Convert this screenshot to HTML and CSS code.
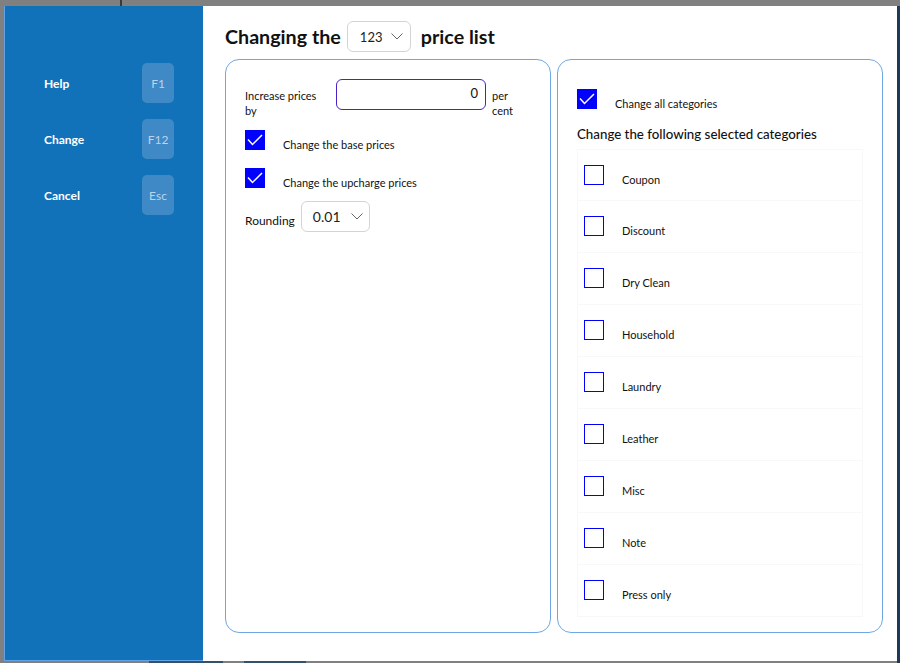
FILE: index.html
```html
<!DOCTYPE html>
<html lang="en">
<head>
<meta charset="utf-8">
<title>Changing the price list</title>
<link rel="stylesheet" href="styles.css">
</head>
<body>
<div class="backdrop">
  <span class="bg-line bg-line-top"></span>
  <span class="bg-block bg-block-1"></span>
  <span class="bg-block bg-block-2"></span>
  <span class="bg-edge"></span>
</div>
<div class="modal">
  <aside class="sidebar">
    <div class="cmd"><span class="cmd-label">Help</span><span class="key">F1</span></div>
    <div class="cmd"><span class="cmd-label">Change</span><span class="key">F12</span></div>
    <div class="cmd"><span class="cmd-label">Cancel</span><span class="key">Esc</span></div>
  </aside>
  <main class="content">
    <h1 class="title">
      <span>Changing the</span>
      <span class="select select-title">123
        <svg class="chev" width="12" height="7" viewBox="0 0 12 7"><polyline points="0.5,0.5 6,6 11.5,0.5" fill="none" stroke="#666" stroke-width="1"/></svg>
      </span>
      <span>price list</span>
    </h1>
    <div class="cards">
      <section class="card card-left">
        <div class="inc-row">
          <label class="inc-label">Increase prices by</label>
          <div class="input">0</div>
          <span class="inc-unit">per cent</span>
        </div>
        <div class="check-row check-base">
          <span class="cb cb-on"><svg width="20" height="20" viewBox="0 0 20 20"><polyline points="3,9.5 7.5,14.5 17,5" fill="none" stroke="#fff" stroke-width="1.5"/></svg></span>
          <span class="check-label">Change the base prices</span>
        </div>
        <div class="check-row check-up">
          <span class="cb cb-on"><svg width="20" height="20" viewBox="0 0 20 20"><polyline points="3,9.5 7.5,14.5 17,5" fill="none" stroke="#fff" stroke-width="1.5"/></svg></span>
          <span class="check-label">Change the upcharge prices</span>
        </div>
        <div class="round-row">
          <span class="round-label">Rounding</span>
          <span class="select select-round">0.01
            <svg class="chev" width="12" height="7" viewBox="0 0 12 7"><polyline points="0.5,0.5 6,6 11.5,0.5" fill="none" stroke="#666" stroke-width="1"/></svg>
          </span>
        </div>
      </section>
      <section class="card card-right">
        <div class="check-row">
          <span class="cb cb-on"><svg width="20" height="20" viewBox="0 0 20 20"><polyline points="3,9.5 7.5,14.5 17,5" fill="none" stroke="#fff" stroke-width="1.5"/></svg></span>
          <span class="check-label">Change all categories</span>
        </div>
        <h2 class="sub">Change the following selected categories</h2>
        <ul class="cats">
          <li class="cat"><span class="cb"></span><span class="check-label">Coupon</span></li>
          <li class="cat"><span class="cb"></span><span class="check-label">Discount</span></li>
          <li class="cat"><span class="cb"></span><span class="check-label">Dry Clean</span></li>
          <li class="cat"><span class="cb"></span><span class="check-label">Household</span></li>
          <li class="cat"><span class="cb"></span><span class="check-label">Laundry</span></li>
          <li class="cat"><span class="cb"></span><span class="check-label">Leather</span></li>
          <li class="cat"><span class="cb"></span><span class="check-label">Misc</span></li>
          <li class="cat"><span class="cb"></span><span class="check-label">Note</span></li>
          <li class="cat"><span class="cb"></span><span class="check-label">Press only</span></li>
        </ul>
      </section>
    </div>
  </main>
</div>
</body>
</html>
```

FILE: styles.css
```css
* { box-sizing: border-box; }
html, body { margin: 0; padding: 0; }
body {
  width: 900px;
  height: 663px;
  overflow: hidden;
  background: #808080;
  font-family: Lato, "Noto Sans", sans-serif;
  color: #111;
  position: relative;
}
.backdrop { position: absolute; inset: 0; }
.bg-line-top { position: absolute; left: 120px; top: 0; width: 2px; height: 6px; background: #3a3a3a; }
.bg-block { position: absolute; top: 661px; height: 2px; background: #33506f; }
.bg-block-1 { left: 149px; width: 74px; }
.bg-block-2 { left: 244px; width: 62px; }
.bg-edge { position: absolute; left: 897px; top: 6px; width: 3px; height: 657px; background: #1f3a58; }

.modal {
  position: relative;
  margin: 6px 0 0 4px;
  width: 893px;
  height: 655px;
  background: #fff;
  display: flex;
}
.sidebar {
  width: 199px;
  background: #1172b9;
  border-left: 1px solid #62a3e6;
  border-bottom: 1px solid #62a3e6;
  padding: 57px 29px 0 39px;
  display: flex;
  flex-direction: column;
  gap: 16px;
}
.cmd {
  display: flex;
  align-items: center;
  justify-content: space-between;
  height: 40px;
}
.cmd-label { color: #fff; font-size: 12px; font-weight: 700; }
.key {
  width: 32px;
  height: 40px;
  border-radius: 5px;
  background: #3f89c6;
  color: #b9d4ec;
  font-size: 12px;
  display: flex;
  align-items: center;
  justify-content: center;
}
.content {
  flex: 1;
  padding: 15px 14px 28px 22px;
  display: flex;
  flex-direction: column;
  gap: 7px;
}
.title {
  margin: 0;
  height: 31px;
  display: flex;
  align-items: center;
  gap: 10px;
  font-size: 19.7px;
  font-weight: 700;
  color: #111;
}
.select {
  display: inline-flex;
  align-items: center;
  height: 31px;
  border: 1px solid #d4d4d4;
  border-radius: 6px;
  background: #fff;
  font-weight: 400;
  color: #222;
}
.select-title { width: 64px; padding-left: 12px; gap: 9px; font-size: 13px; margin-left: -4px; }
.select-round { width: 69px; padding-left: 11px; gap: 10px; font-size: 14px; }
.chev { display: block; }

.cards {
  flex: 1;
  display: grid;
  grid-template-columns: 326px 326px;
  gap: 6px;
}
.card {
  border: 1px solid #6ea7e4;
  border-radius: 14px;
  display: flex;
  flex-direction: column;
}
.card-left { padding: 19px 19px; }
.inc-row { display: flex; align-items: flex-start; gap: 6px; height: 31px; }
.inc-label { width: 85px; font-size: 11px; line-height: 15px; padding-top: 9px; }
.input {
  flex: none;
  width: 150px;
  height: 31px;
  border: 1px solid #4a22c7;
  border-radius: 6px;
  text-align: right;
  padding: 5px 7px 0 0;
  font-size: 13px;
}
.inc-unit { width: 30px; font-size: 11px; line-height: 15px; padding-top: 9px; }
.check-row { display: flex; align-items: flex-start; gap: 18px; height: 20px; }
.check-base { margin-top: 20px; }
.check-up { margin-top: 18px; }
.cb {
  flex: none;
  width: 20px;
  height: 20px;
  border: 1px solid #0000ff;
  background: #fff;
}
.cb-on { background: #0000ff; border: none; }
.cb svg { display: block; }
.check-label { font-size: 11px; line-height: 15px; padding-top: 7px; }
.round-row { display: flex; align-items: center; gap: 6px; margin-top: 13px; }
.round-label { font-size: 12px; padding-top: 8px; }

.card-right { padding: 29px 19px 0 19px; }
.sub {
  margin: 15px 0 0 0;
  font-size: 13.3px;
  font-weight: 500;
  line-height: 20px;
  color: #111;
}
.cats { list-style: none; margin: 5px 0 0 0; padding: 0; }
.cat {
  height: 52px;
  display: flex;
  align-items: flex-start;
  gap: 18px;
  padding: 15px 0 0 6px;
  border: 1px solid #f8f8f8;
  border-top: none;
}
.cat:first-child { border-top: 1px solid #f8f8f8; }
```
